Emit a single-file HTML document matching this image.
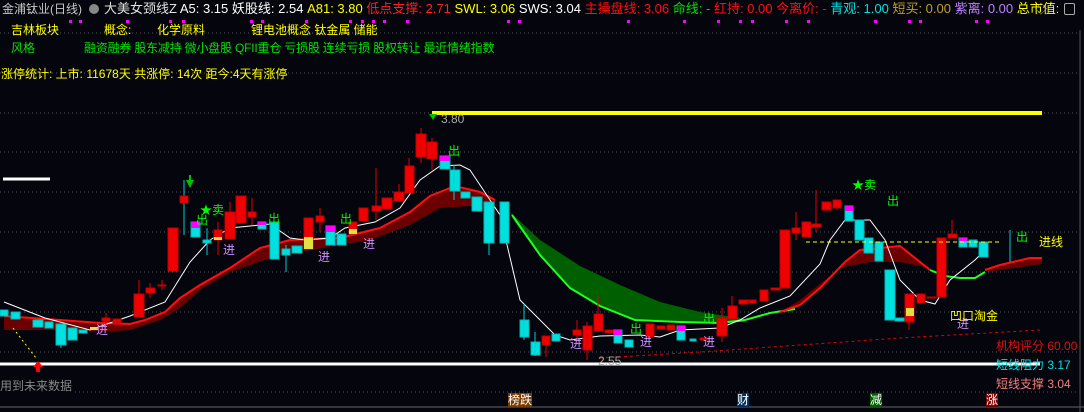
<!DOCTYPE html>
<html><head><meta charset="utf-8"><style>
body{margin:0;background:#05050d;width:1084px;height:412px;overflow:hidden;font-family:"Liberation Sans","Noto Sans CJK SC",sans-serif;}
.t{position:absolute;white-space:nowrap;font-size:12px;line-height:14px;}
</style></head><body>
<div style="position:relative;width:1084px;height:412px;">
<svg width="1084" height="412" style="position:absolute;left:0;top:0">
<g fill="#ff00ff">
<rect x="69" y="20" width="3" height="3"/><rect x="79" y="20" width="3" height="3"/><rect x="126" y="20" width="3" height="3"/><rect x="169" y="20" width="3" height="3"/><rect x="182" y="20" width="3" height="3"/><rect x="250" y="20" width="3" height="3"/><rect x="261" y="20" width="3" height="3"/><rect x="305" y="20" width="3" height="3"/><rect x="349" y="20" width="3" height="3"/><rect x="361" y="20" width="3" height="3"/><rect x="372" y="20" width="3" height="3"/><rect x="383" y="20" width="3" height="3"/><rect x="406" y="20" width="3" height="3"/><rect x="507" y="20" width="3" height="3"/><rect x="518" y="20" width="3" height="3"/>
<rect x="627" y="20" width="3" height="3"/><rect x="683" y="20" width="3" height="3"/><rect x="717" y="20" width="3" height="3"/><rect x="739" y="20" width="3" height="3"/><rect x="751" y="20" width="3" height="3"/><rect x="785" y="20" width="3" height="3"/><rect x="807" y="20" width="3" height="3"/><rect x="874" y="20" width="3" height="3"/><rect x="908" y="20" width="3" height="3"/><rect x="919" y="20" width="3" height="3"/><rect x="975" y="20" width="3" height="3"/><rect x="986" y="20" width="3" height="3"/>
</g>
<g stroke="#555" stroke-dasharray="1,3" stroke-width="1">
<line x1="0" y1="33" x2="1078" y2="33"/><line x1="0" y1="73" x2="1078" y2="73"/>
<line x1="0" y1="113" x2="1078" y2="113"/><line x1="0" y1="152" x2="1078" y2="152"/><line x1="0" y1="192" x2="1078" y2="192"/><line x1="0" y1="232" x2="1078" y2="232"/><line x1="0" y1="272" x2="1078" y2="272"/><line x1="0" y1="312" x2="1078" y2="312"/><line x1="0" y1="352" x2="1078" y2="352"/><line x1="75" y1="392" x2="1078" y2="392"/>
</g>
<line x1="0" y1="407" x2="1084" y2="407" stroke="#666"/>
<line x1="1080" y1="30" x2="1080" y2="412" stroke="#555"/>
<polygon fill="#6a0000" points="4,316 60,320 100,323 130,324 145,320 165,312 180,298 200,285 230,268 260,248 290,240 340,238 380,228 410,212 430,196 455,186 480,192 495,200 495,212 470,206 440,208 410,225 370,240 340,245 300,252 270,258 230,272 200,290 180,308 160,320 130,330 100,332 60,330 4,330"/>
<polyline fill="none" stroke="#ff1010" stroke-width="2" points="4,316 60,320 100,323 130,324 145,320 165,312 180,298 200,285 230,268 260,248 290,240 340,238 380,228 410,212 430,196 455,186 480,192 495,200"/>
<polygon fill="#006000" points="510,212 540,240 580,266 620,285 660,302 700,312 740,318 745,322 720,322 680,322 635,320 600,306 570,288 540,255 515,222"/>
<polyline fill="none" stroke="#20ff20" stroke-width="2" points="512,215 540,255 570,288 600,306 635,320 680,322 720,323 745,320 770,313 795,309"/>
<polygon fill="#6a0000" points="780,312 800,305 820,288 845,262 860,250 900,246 915,258 930,268 900,262 870,262 840,268 800,300"/>
<polyline fill="none" stroke="#ff1010" stroke-width="2" points="780,312 800,305 820,288 845,262 860,250 900,246 915,258 930,270"/>
<polyline fill="none" stroke="#20ff20" stroke-width="2" points="930,270 945,276 960,278 975,278 985,272"/>
<polygon fill="#6a0000" points="985,272 1000,265 1030,258 1042,258 1042,264 1000,270"/>
<polyline fill="none" stroke="#ff1010" stroke-width="2" points="985,270 1000,265 1030,258 1042,258"/>
<polyline fill="none" stroke="#fff" stroke-width="1" points="4,302 45,318 90,330 130,316 165,302 190,262 210,240 230,228 270,224 290,238 305,240 330,238 345,228 375,222 400,208 420,180 440,166 460,165 470,170 490,200 500,215 520,300 555,335 570,340 600,336 640,335 660,337 680,330 720,328 740,320 760,308 790,296 820,264 830,240 845,220 870,220 885,240 900,280 920,300 935,304 950,280 975,260 985,250"/>
<g stroke-width="1">
<g fill="#00e0e0" stroke="#00b8b8">
<rect x="0" y="310" width="8" height="6"/><rect x="11" y="312" width="9" height="7"/><rect x="33" y="320" width="10" height="7"/><rect x="45" y="322" width="8" height="6"/><rect x="56" y="324" width="10" height="21"/><rect x="68" y="328" width="9" height="12"/><rect x="79" y="330" width="8" height="3"/>
<rect x="191" y="222" width="9" height="15"/><rect x="203" y="240" width="8" height="3"/><rect x="258" y="222" width="8" height="7"/><rect x="270" y="222" width="9" height="37"/><rect x="282" y="249" width="8" height="6"/><rect x="292" y="246" width="10" height="7"/><rect x="326" y="226" width="9" height="19"/><rect x="337" y="234" width="9" height="11"/>
<rect x="440" y="156" width="10" height="13"/><rect x="450" y="170" width="10" height="21"/><rect x="461" y="192" width="9" height="6"/><rect x="472" y="197" width="10" height="14"/><rect x="484" y="202" width="10" height="41"/><rect x="500" y="202" width="9" height="41"/>
<rect x="520" y="320" width="9" height="17"/><rect x="531" y="342" width="9" height="13"/><rect x="552" y="334" width="8" height="7"/><rect x="614" y="330" width="8" height="13"/><rect x="625" y="340" width="8" height="7"/><rect x="677" y="326" width="8" height="14"/><rect x="690" y="339" width="6" height="2"/>
<rect x="845" y="206" width="8" height="15"/><rect x="855" y="220" width="9" height="20"/><rect x="864" y="238" width="9" height="15"/><rect x="875" y="242" width="8" height="19"/><rect x="885" y="270" width="10" height="50"/><rect x="895" y="318" width="9" height="3"/><rect x="959" y="238" width="8" height="9"/><rect x="969" y="240" width="8" height="7"/><rect x="979" y="242" width="9" height="15"/>
</g>
<g stroke="#00d0d0">
<line x1="61" y1="345" x2="61" y2="348"/><line x1="184" y1="180" x2="184" y2="235"/><line x1="207" y1="228" x2="207" y2="255"/><line x1="286" y1="245" x2="286" y2="272"/><line x1="454" y1="165" x2="454" y2="200"/><line x1="489" y1="243" x2="489" y2="255"/><line x1="524" y1="304" x2="524" y2="340"/><line x1="535" y1="332" x2="535" y2="356"/><line x1="1010" y1="230" x2="1010" y2="262"/>
</g>
<g fill="#f00000" stroke="#c00000">
<rect x="102" y="318" width="8" height="3"/><rect x="113" y="319" width="8" height="4"/><rect x="134" y="294" width="10" height="23"/><rect x="146" y="288" width="9" height="5"/><rect x="158" y="285" width="8" height="1"/><rect x="168" y="228" width="10" height="43"/><rect x="180" y="196" width="8" height="7"/>
<rect x="214" y="230" width="8" height="10"/><rect x="225" y="212" width="10" height="27"/><rect x="236" y="196" width="10" height="27"/><rect x="248" y="212" width="8" height="5"/><rect x="304" y="218" width="9" height="31"/><rect x="316" y="216" width="8" height="6"/><rect x="349" y="222" width="8" height="12"/><rect x="359" y="208" width="9" height="13"/><rect x="372" y="206" width="9" height="5"/><rect x="382" y="198" width="10" height="11"/><rect x="394" y="192" width="10" height="9"/><rect x="405" y="166" width="9" height="27"/><rect x="416" y="134" width="10" height="23"/><rect x="427" y="142" width="10" height="17"/>
<rect x="542" y="336" width="8" height="9"/><rect x="573" y="330" width="8" height="5"/><rect x="583" y="326" width="9" height="24"/><rect x="594" y="314" width="9" height="17"/><rect x="605" y="330" width="8" height="3"/><rect x="646" y="324" width="8" height="13"/><rect x="657" y="326" width="8" height="3"/><rect x="667" y="325" width="8" height="5"/><rect x="700" y="338" width="8" height="2"/><rect x="717" y="318" width="10" height="18"/><rect x="728" y="306" width="9" height="13"/><rect x="739" y="300" width="9" height="4"/><rect x="749" y="300" width="7" height="3"/><rect x="760" y="290" width="8" height="11"/><rect x="771" y="288" width="9" height="2"/><rect x="780" y="230" width="10" height="58"/><rect x="792" y="228" width="8" height="5"/><rect x="802" y="222" width="9" height="15"/><rect x="812" y="224" width="9" height="3"/><rect x="822" y="202" width="9" height="8"/><rect x="833" y="200" width="8" height="8"/>
<rect x="905" y="294" width="9" height="28"/><rect x="917" y="294" width="8" height="9"/><rect x="927" y="297" width="9" height="1"/><rect x="937" y="238" width="9" height="59"/><rect x="948" y="234" width="9" height="4"/>
</g>
<g stroke="#e00000">
<line x1="106" y1="313" x2="106" y2="326"/><line x1="139" y1="280" x2="139" y2="294"/><line x1="150" y1="283" x2="150" y2="298"/><line x1="162" y1="280" x2="162" y2="290"/><line x1="218" y1="222" x2="218" y2="255"/><line x1="230" y1="202" x2="230" y2="212"/><line x1="252" y1="198" x2="252" y2="225"/><line x1="320" y1="208" x2="320" y2="232"/><line x1="376" y1="168" x2="376" y2="220"/><line x1="399" y1="184" x2="399" y2="192"/><line x1="409" y1="158" x2="409" y2="166"/><line x1="421" y1="128" x2="421" y2="163"/><line x1="432" y1="138" x2="432" y2="170"/>
<line x1="546" y1="345" x2="546" y2="357"/><line x1="577" y1="320" x2="577" y2="340"/><line x1="587" y1="322" x2="587" y2="360"/><line x1="598" y1="296" x2="598" y2="314"/><line x1="722" y1="308" x2="722" y2="342"/><line x1="732" y1="296" x2="732" y2="306"/><line x1="796" y1="212" x2="796" y2="240"/><line x1="816" y1="190" x2="816" y2="232"/><line x1="909" y1="322" x2="909" y2="330"/><line x1="952" y1="220" x2="952" y2="234"/>
</g>
<g fill="#e0e040"><rect x="214" y="237" width="8" height="3"/><rect x="304" y="237" width="9" height="12"/><rect x="349" y="229" width="8" height="5"/><rect x="906" y="308" width="8" height="8"/><rect x="90" y="327" width="8" height="3"/></g>
<g fill="#ff00ff"><rect x="191" y="222" width="9" height="6"/><rect x="258" y="222" width="8" height="3"/><rect x="326" y="226" width="9" height="6"/><rect x="440" y="156" width="10" height="5"/><rect x="614" y="330" width="8" height="5"/><rect x="677" y="326" width="8" height="5"/><rect x="845" y="206" width="8" height="5"/><rect x="959" y="238" width="8" height="3"/></g>
</g>
<line x1="432" y1="113" x2="1042" y2="113" stroke="#ffff00" stroke-width="4"/>
<line x1="0" y1="364" x2="1040" y2="364" stroke="#fff" stroke-width="3"/>
<line x1="3" y1="179" x2="50" y2="179" stroke="#fff" stroke-width="3"/>
<line x1="13" y1="328" x2="36" y2="358" stroke="#ffff00" stroke-dasharray="2,3"/>
<polygon fill="#f00" points="38,361 33,367 36,367 36,372 40,372 40,367 43,367"/>
<polyline fill="none" stroke="#e00000" stroke-dasharray="3,3" points="600,358 700,352 800,345 900,338 1040,330"/>
<line x1="806" y1="242" x2="1000" y2="242" stroke="#ffff00" stroke-dasharray="4,3"/>
<polygon fill="#00c000" points="186,180 194,180 190,188"/><line x1="190" y1="175" x2="190" y2="182" stroke="#00c000" stroke-width="2"/>
<polygon fill="#00c000" points="429,114 437,114 433,120"/>
</svg>
<div class="t" style="left:2px;top:2px;color:#c8c8c8">金浦钛业(日线)</div>
<div style="position:absolute;left:89px;top:4px;width:10px;height:10px;border-radius:5px;background:#888"></div>
<div class="t" style="left:104px;top:1px;width:954px;overflow:hidden;font-size:13px;line-height:16px;color:#e0e0e0">大美女颈线Z <span style="color:#fff">A5: 3.15</span> <span style="color:#fff">妖股线: 2.54</span> <span style="color:#ffff00">A81: 3.80</span> <span style="color:#ff2020">低点支撑: 2.71</span> <span style="color:#ffff00">SWL: 3.06</span> <span style="color:#fff">SWS: 3.04</span> <span style="color:#ff1010">主操盘线: 3.06</span> <span style="color:#00e000">命线: -</span> <span style="color:#ff1010">红持: 0.00</span> <span style="color:#ff1010">今离价: -</span> <span style="color:#00e0e0">青观: 1.00</span> <span style="color:#c0a030">短买: 0.00</span> <span style="color:#c080ff">紫离: 0.00</span> <span style="color:#ffff00">总市值: 30.3</span></div>
<div class="t" style="left:1035px;top:2px;color:#aaa">◇</div>
<div style="position:absolute;left:1064px;top:3px;width:9px;height:10px;border:1px solid #aaa;border-radius:2px"></div>
<div class="t" style="left:11px;top:23px;color:#ffff00">吉林板块</div>
<div class="t" style="left:104px;top:23px;color:#ffff00">概念:</div>
<div class="t" style="left:157px;top:23px;color:#ffff00">化学原料</div>
<div class="t" style="left:251px;top:23px;color:#ffff00">锂电池概念 钛金属 储能</div>
<div class="t" style="left:11px;top:41px;color:#00e000">风格</div>
<div class="t" style="left:84px;top:41px;color:#00e000;letter-spacing:-0.2px">融资融券 股东减持 微小盘股 QFII重仓 亏损股 连续亏损 股权转让 最近情绪指数</div>
<div class="t" style="left:1px;top:67px;color:#ffff00">涨停统计: 上市: 11678天 共涨停: 14次 距今:4天有涨停</div>
<div class="t" style="left:441px;top:112px;color:#aaa">3.80</div>
<div class="t" style="left:598px;top:354px;color:#aaa">2.55</div>
<div class="t" style="left:0px;top:379px;color:#888">用到未来数据</div>
<div class="t" style="left:200px;top:203px;color:#00ff00">★卖</div>
<div class="t" style="left:852px;top:178px;color:#00ff00">★卖</div>
<div class="t" style="color:#00ff00;left:196px;top:213px">出</div>
<div class="t" style="color:#00ff00;left:268px;top:212px">出</div>
<div class="t" style="color:#00ff00;left:340px;top:212px">出</div>
<div class="t" style="color:#00ff00;left:448px;top:144px">出</div>
<div class="t" style="color:#00ff00;left:630px;top:322px">出</div>
<div class="t" style="color:#00ff00;left:703px;top:312px">出</div>
<div class="t" style="color:#00ff00;left:887px;top:194px">出</div>
<div class="t" style="color:#00ff00;left:1016px;top:230px">出</div>
<div class="t" style="color:#d090ff;left:96px;top:323px">进</div>
<div class="t" style="color:#d090ff;left:223px;top:243px">进</div>
<div class="t" style="color:#d090ff;left:318px;top:250px">进</div>
<div class="t" style="color:#d090ff;left:363px;top:237px">进</div>
<div class="t" style="color:#d090ff;left:570px;top:337px">进</div>
<div class="t" style="color:#d090ff;left:640px;top:335px">进</div>
<div class="t" style="color:#d090ff;left:703px;top:335px">进</div>
<div class="t" style="color:#d090ff;left:957px;top:317px">进</div>
<div class="t" style="color:#ffff00;left:1039px;top:235px">进线</div>
<div class="t" style="color:#ffff00;left:950px;top:309px">凹口淘金</div>
<div class="t" style="color:#e01010;left:996px;top:339px">机构评分 60.00</div>
<div class="t" style="color:#00e0e0;left:996px;top:358px">短线阻力 3.17</div>
<div class="t" style="color:#f08080;left:996px;top:377px">短线支撑 3.04</div>
<div class="t" style="left:508px;top:393px;color:#fff;background:#7a3a00">榜跌</div>
<div class="t" style="left:737px;top:393px;color:#fff;background:#003060">财</div>
<div class="t" style="left:870px;top:393px;color:#fff;background:#006000">减</div>
<div class="t" style="left:986px;top:393px;color:#fff;background:#800000">涨</div>
</div>
</body></html>
